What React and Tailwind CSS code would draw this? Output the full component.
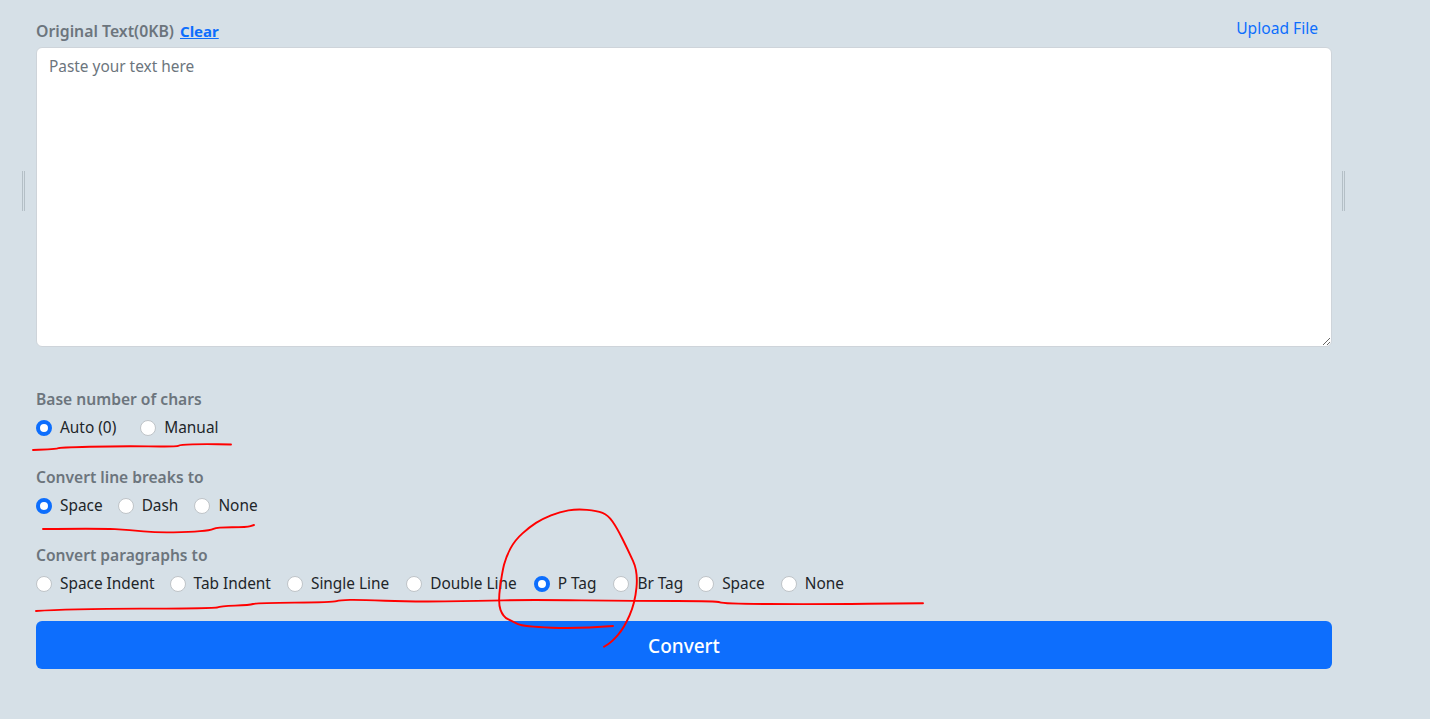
const font = "font-['Noto_Sans',sans-serif]"

const groups = [
  {
    title: 'Base number of chars',
    name: 'base',
    options: [
      { label: 'Auto (0)', checked: true, gap: 'mr-6' },
      { label: 'Manual' },
    ],
  },
  {
    title: 'Convert line breaks to',
    name: 'breaks',
    options: [
      { label: 'Space', checked: true, gap: 'mr-[15px]' },
      { label: 'Dash', gap: 'mr-4' },
      { label: 'None' },
    ],
  },
  {
    title: 'Convert paragraphs to',
    name: 'paragraphs',
    options: [
      { label: 'Space Indent', gap: 'mr-[15px]' },
      { label: 'Tab Indent', gap: 'mr-4' },
      { label: 'Single Line', gap: 'mr-[17px]' },
      { label: 'Double Line', gap: 'mr-[17px]' },
      { label: 'P Tag', checked: true, gap: 'mr-[17px]' },
      { label: 'Br Tag', gap: 'mr-[15px]' },
      { label: 'Space', gap: 'mr-4' },
      { label: 'None' },
    ],
  },
]

// red pen strokes, as [x, y] points traced off the picture
const strokes = [
  [[33, 450], [57, 449], [59, 447.5], [120, 446], [177, 446.7], [180, 444.7], [205, 444], [231, 444.5]],
  [[43, 529], [100, 528.3], [130, 530], [157, 532.7], [190, 532], [210, 530.3], [217, 527.3], [247, 527.3], [254, 525]],
  [[36, 611], [67, 609], [215, 608.3], [220, 606.3], [250, 605], [256, 603], [333, 602.3], [340, 600], [360, 599.7], [410, 601.7], [480, 601], [527, 599.7], [637, 601], [717, 601], [723, 603.7], [813, 604.3], [923, 603.3]],
  [[613, 626], [580, 628.7], [523, 626.7], [513, 621.7], [503, 616.7], [498, 603], [502, 573], [506, 556.7], [515, 540], [530, 526.7], [542, 519], [560, 511.7], [577, 509], [597, 510.7], [608, 515], [617, 528], [628, 550], [638, 571.7], [635, 603], [624, 628], [612, 641.7], [604, 646.7]],
]

// midpoint smoothing so the strokes don't look polygonal
function smooth(points) {
  let d = `M${points[0][0]} ${points[0][1]}`
  for (let i = 1; i < points.length - 1; i++) {
    const [x, y] = points[i]
    const [nx, ny] = points[i + 1]
    d += ` Q${x} ${y} ${(x + nx) / 2} ${(y + ny) / 2}`
  }
  const last = points[points.length - 1]
  return `${d} L${last[0]} ${last[1]}`
}

function Handle() {
  return (
    <div className="mt-[124px] flex h-10 w-[3px] justify-between">
      <span className="w-px bg-[#b4bfc6]" />
      <span className="w-px bg-[#b4bfc6]" />
    </div>
  )
}

function Radio({ name, label, checked, gap }) {
  return (
    <label className={`flex items-center gap-2 ${gap || ''}`}>
      <input
        type="radio"
        name={name}
        defaultChecked={checked}
        className="h-4 w-4 appearance-none rounded-full border border-[#bfc4c8] bg-white checked:border-[4px] checked:border-[#0d6efd]"
      />
      <span className="text-[15.4px] leading-6 text-[#212529]">{label}</span>
    </label>
  )
}

function Scribbles() {
  return (
    <svg className="pointer-events-none absolute left-0 top-0" width="1430" height="719" fill="none" stroke="#f00" strokeWidth="1.9" strokeLinejoin="round" strokeLinecap="round">
      {strokes.map((points, i) => (
        <path key={i} d={smooth(points)} />
      ))}
    </svg>
  )
}

export default function App() {
  return (
    <div className={`${font} relative min-h-[719px] bg-[#d6e0e7]`}>
      <div className="flex items-start pt-[47px]">
        <div className="w-9 pl-[22px]">
          <Handle />
        </div>
        <div className="relative w-[1296px]">
          <div className="absolute bottom-full left-0 flex items-baseline gap-1.5 pb-[3px]">
            <span className="text-[15.8px] font-semibold text-[#6c757d]">Original Text(0KB)</span>
            <a href="#" className="text-[15px] font-bold text-[#0d6efd] underline">Clear</a>
          </div>
          <a href="#" className="absolute bottom-full right-[14px] pb-[7px] text-[15.6px] text-[#0d6efd]">Upload File</a>
          <textarea
            placeholder="Paste your text here"
            className="block h-[300px] w-full rounded-md border border-[#ced4da] bg-white px-3 pb-1.5 pt-[7px] text-[15.4px] leading-6 outline-none placeholder:text-[#6c757d]"
          />
        </div>
        <div className="pl-[10px]">
          <Handle />
        </div>
      </div>

      <div className="ml-9 w-[1296px] pt-10">
        {groups.map((group) => (
          <div key={group.name} className="mb-[25px] flex h-[53px] flex-col justify-between">
            <div className="text-[15.6px] font-semibold leading-6 text-[#6c757d]">{group.title}</div>
            <div className="flex">
              {group.options.map((option) => (
                <Radio key={option.label} name={group.name} {...option} />
              ))}
            </div>
          </div>
        ))}
        <button type="button" className="h-12 w-full rounded-md bg-[#0d6efd] pt-0.5 text-[19px] font-medium text-white">
          Convert
        </button>
      </div>

      <Scribbles />
    </div>
  )
}
